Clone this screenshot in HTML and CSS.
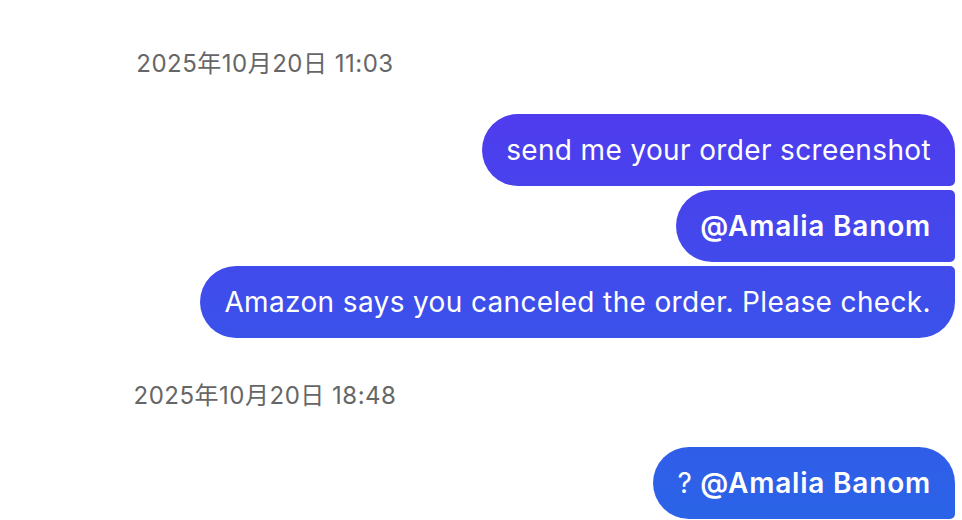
FILE: index.html
```html
<!DOCTYPE html>
<html lang="zh">
<head>
<meta charset="utf-8">
<link rel="stylesheet" href="styles.css">
</head>
<body>
<div class="chat">
  <div class="time">2025年10月20日 11:03</div>
  <div class="group">
    <div class="bubble first">send me your order screenshot</div>
    <div class="bubble middle"><b>@Amalia Banom</b></div>
    <div class="bubble last">Amazon says you canceled the order. Please check.</div>
  </div>
  <div class="time second">2025年10月20日 18:48</div>
  <div class="group">
    <div class="bubble first">? <b>@Amalia Banom</b></div>
  </div>
</div>
</body>
</html>
```
FILE: styles.css
```css
html, body {
  margin: 0;
  padding: 0;
  background: #ffffff;
  overflow: hidden;
}
.chat {
  display: flex;
  flex-direction: column;
  padding: 50px 7px 0 0;
  font-family: Inter, "Noto Sans CJK SC", sans-serif;
}
.time {
  width: 530px;
  text-align: center;
  font-size: 24px;
  letter-spacing: 0.5px;
  line-height: 28px;
  color: #666666;
  margin-bottom: 36px;
}
.time.second {
  margin-top: 44px;
  margin-bottom: 37px;
}
.group {
  display: flex;
  flex-direction: column;
  align-items: flex-end;
  gap: 4px;
}
.bubble {
  box-sizing: border-box;
  height: 72px;
  padding: 18px 24px;
  font-size: 28px;
  letter-spacing: 0.36px;
  line-height: 36px;
  color: #ffffff;
  white-space: nowrap;
  background: linear-gradient(to bottom, #5930f0, #2a64e7) fixed;
  border-radius: 36px 5px 5px 36px;
}
.bubble b {
  font-weight: 600;
  letter-spacing: 0.8px;
}
.bubble.first {
  border-top-right-radius: 36px;
}
.bubble.last {
  border-bottom-right-radius: 36px;
}
```
